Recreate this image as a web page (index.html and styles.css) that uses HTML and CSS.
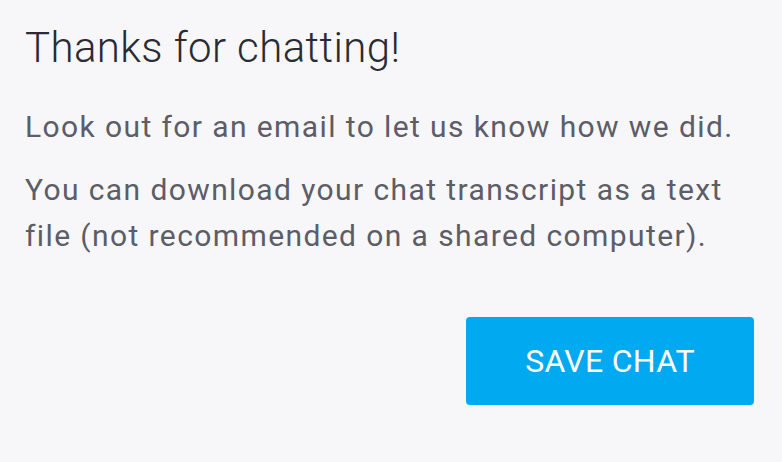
FILE: index.html
```html
<!DOCTYPE html>
<html>
<head>
<meta charset="utf-8">
<link rel="stylesheet" href="styles.css">
</head>
<body>
<main class="panel">
  <h1 class="title">Thanks for chatting!</h1>
  <p class="text">Look out for an email to let us know how we did.</p>
  <p class="text">You can download your chat transcript as a text file (not recommended on a shared computer).</p>
  <div class="actions">
    <button class="save">SAVE CHAT</button>
  </div>
</main>
</body>
</html>
```
FILE: styles.css
```css
html, body {
  margin: 0;
  padding: 0;
  background: #f7f7f9;
}
.panel {
  padding: 23px 28px 0 25px;
  font-family: Roboto, "Liberation Sans", sans-serif;
}
.title {
  margin: 0;
  font-weight: 300;
  font-size: 42px;
  line-height: 50px;
  letter-spacing: 0.4px;
  color: #2a2b33;
}
.text {
  margin: 31px 0 0;
  font-size: 30px;
  line-height: 46px;
  letter-spacing: 1.4px;
  color: #5c5d67;
  max-width: 720px;
}
.text + .text {
  margin-top: 17px;
}
.actions {
  display: flex;
  justify-content: flex-end;
  margin-top: 58px;
}
.save {
  width: 288px;
  height: 88px;
  border: none;
  border-radius: 4px;
  background: #00a9f0;
  color: #fff;
  font-family: Roboto, "Liberation Sans", sans-serif;
  font-size: 32px;
  font-weight: 400;
  letter-spacing: 0.3px;
  padding: 0;
}
```
